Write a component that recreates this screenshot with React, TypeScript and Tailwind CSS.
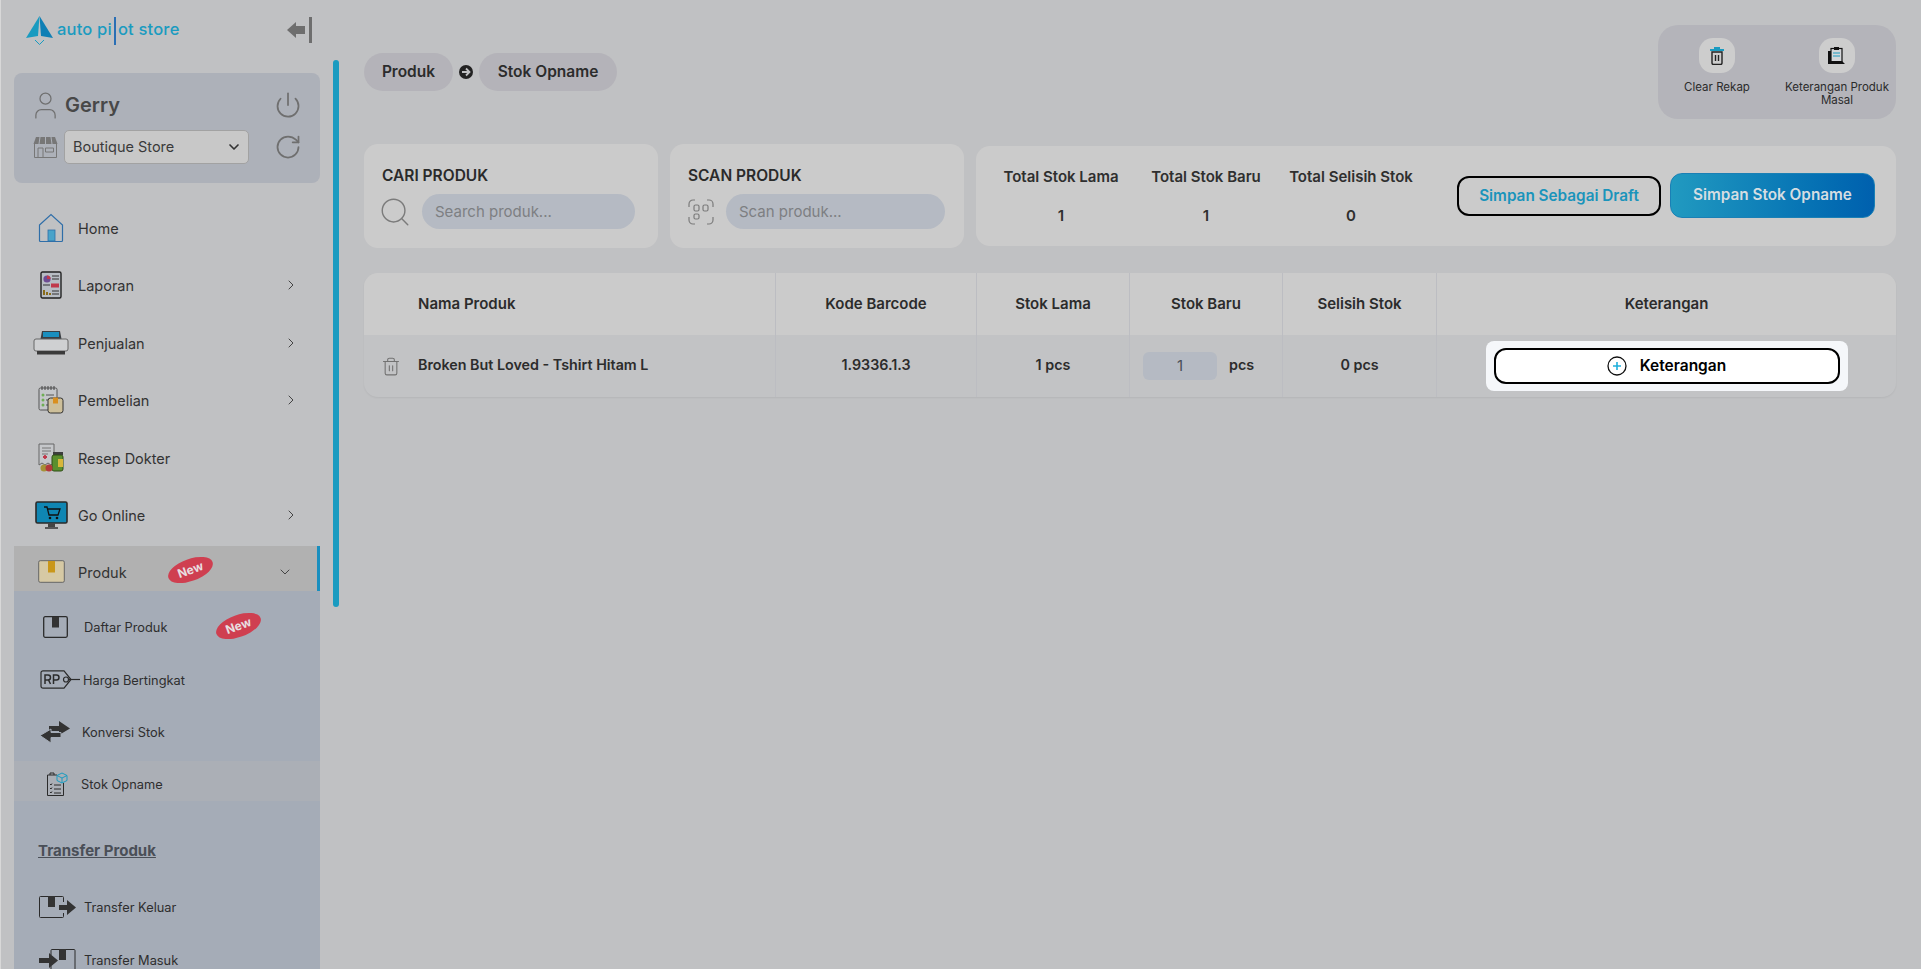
import React from 'react';
import { ChevronDown, ChevronRight, Power, RotateCw, Search, Trash2, User } from 'lucide-react';

const font = { fontFamily: 'Inter, "Noto Sans", sans-serif' };

const HomeIcon = () => (
  <svg width="26" height="30" viewBox="0 0 26 30" fill="none">
    <path d="M1.5 12 13 1.5 24.5 12v15.5a1 1 0 0 1-1 1h-21a1 1 0 0 1-1-1z" stroke="#2f6ea8" strokeWidth="1.2" />
    <rect x="10" y="17" width="7" height="11" fill="#4aa3c9" stroke="#2f6ea8" strokeWidth=".8" />
  </svg>
);

const LaporanIcon = () => (
  <svg width="22" height="28" viewBox="0 0 22 28">
    <rect x="1" y="1" width="20" height="26" rx="1.5" fill="#b8bdc4" stroke="#222" strokeWidth="1.4" />
    <circle cx="7" cy="8" r="3.6" fill="#6d4c93" />
    <path d="M7 8V4.4A3.6 3.6 0 0 1 10.6 8z" fill="#c0394b" />
    <path d="M12 5h7M12 8h7M3 14h7" stroke="#333" strokeWidth="1.2" />
    <rect x="11" y="12.5" width="8" height="4" fill="#c0394b" />
    <path d="M4 24v-5M7 24v-3M10 24v-2" stroke="#8a6d1c" strokeWidth="2" />
    <path d="M12 20h7M12 23h7" stroke="#333" strokeWidth="1.2" />
  </svg>
);

const PenjualanIcon = () => (
  <svg width="36" height="25" viewBox="0 0 36 25">
    <path d="M9 1h18l1.500 8h-21z" fill="#3a3f44" />
    <rect x="10" y="2" width="16" height="5" fill="#1a8fbf" />
    <rect x="1" y="9" width="34" height="12" rx="2" fill="#cfd0d2" stroke="#666" />
    <rect x="4" y="21" width="28" height="3.500" fill="#3a3a3a" />
  </svg>
);

const PembelianIcon = () => (
  <svg width="26" height="28" viewBox="0 0 26 28">
    <rect x="1" y="2" width="18" height="22" rx="1.500" fill="#c5c7ca" stroke="#555" />
    <path d="M4 0v4M7 0v4M10 0v4M13 0v4M16 0v4" stroke="#444" strokeWidth="1" />
    <circle cx="5" cy="9" r="1.500" fill="#6fae55" />
    <circle cx="5" cy="14" r="1.500" fill="#6fae55" />
    <circle cx="5" cy="19" r="1.500" fill="#6fae55" />
    <path d="M8 9h8M8 14h4M8 19h4" stroke="#555" />
    <rect x="10" y="12" width="15" height="15" rx="2.500" fill="#cdbf9a" stroke="#333" />
    <rect x="15" y="11.500" width="5" height="6" fill="#d98f1f" />
  </svg>
);

const ResepIcon = () => (
  <svg width="26" height="29" viewBox="0 0 26 29">
    <path d="M1 1h15v19l-3 2-3-2-3 2-3-2-3 2z" fill="#c5c7ca" stroke="#666" />
    <path d="M4 5h9M4 8h9M4 11h6" stroke="#777" />
    <path d="M5 14h4M7 12v4" stroke="#c0394b" strokeWidth="1.800" />
    <rect x="15" y="9" width="10" height="3" fill="#3d3d3d" />
    <rect x="14" y="12" width="11" height="16" rx="2" fill="#5a8f2e" stroke="#2f4f16" />
    <rect x="20" y="16" width="5" height="8" fill="#d8b63a" />
    <circle cx="6" cy="25" r="3.500" fill="#a59237" />
    <circle cx="11" cy="25" r="3.500" fill="#b23a3a" />
  </svg>
);

const GoOnlineIcon = () => (
  <svg width="33" height="28" viewBox="0 0 33 28">
    <rect x="1" y="1" width="31" height="21" rx="1.500" fill="#0f86b3" stroke="#2a2a2a" strokeWidth="1.600" />
    <path d="M9 6h3l2 8h9l2-6H13" fill="none" stroke="#111" strokeWidth="1.300" />
    <circle cx="15" cy="17" r="1.300" fill="#111" />
    <circle cx="22" cy="17" r="1.300" fill="#111" />
    <rect x="13" y="22" width="7" height="4" fill="#444" />
    <path d="M10 27h13" stroke="#111" strokeWidth="1.200" />
  </svg>
);

const ProdukIcon = () => (
  <svg width="27" height="23" viewBox="0 0 27 23">
    <rect x=".7" y=".7" width="25.600" height="21.600" rx="1.500" fill="#d6c9a4" stroke="#666" />
    <rect x="10" y="1" width="7" height="11.500" fill="#c9971a" />
  </svg>
);

const DaftarIcon = () => (
  <svg width="25" height="22" viewBox="0 0 25 22">
    <rect x=".7" y=".7" width="23.600" height="20.600" rx="1.500" fill="none" stroke="#2b2b2b" strokeWidth="1.300" />
    <rect x="9" y="1" width="7" height="10.500" fill="#333" />
  </svg>
);

const HargaIcon = () => (
  <svg width="40" height="19" viewBox="0 0 40 19" fill="none">
    <path d="M3 .8h21l7 8.700-7 8.700H3a2 2 0 0 1-2-2V2.800a2 2 0 0 1 2-2z" stroke="#2b2b2b" strokeWidth="1.200" />
    <circle cx="26" cy="9.500" r="2.500" stroke="#2b2b2b" strokeWidth="1.200" />
    <path d="M28.500 9.500H40" stroke="#2b2b2b" strokeWidth="1.200" />
    <path d="M5 14V5h3a2.500 2.500 0 0 1 0 5H5M8.500 10l2 4M13.500 14V5h3a2.500 2.500 0 0 1 0 5h-3" stroke="#2b2b2b" strokeWidth="1.500" />
  </svg>
);

const KonversiIcon = () => (
  <svg width="30" height="22" viewBox="0 0 30 22" fill="#333">
    <path d="M19 0l11 7.500L19 14v-4H9V5h10z" />
    <path d="M11 8v3.500h10v5H11V22L0 14.500z" stroke="#a5acb7" strokeWidth="1" />
  </svg>
);

const OpnameIcon = () => (
  <svg width="22" height="24" viewBox="0 0 22 24" fill="none">
    <path d="M11 3H1.500v20.500h16V11M4 3V1h4v2" stroke="#2b2b2b" strokeWidth="1" />
    <path d="M4 12l1 1 1-1.500M4 16l1 1 1-1.500M4 20l1 1 1-1.500M8 13h7M8 17h7M8 21h7" stroke="#2b2b2b" strokeWidth="1" />
    <path d="M16 1l5 2.500v5L16 11l-5-2.500v-5zM11 3.500 16 6l5-2.500M16 6v5" stroke="#1a9bc0" strokeWidth="1" />
  </svg>
);

const KeluarIcon = () => (
  <svg width="37" height="22" viewBox="0 0 37 22" fill="none">
    <path d="M24.500 6V1.500a1 1 0 0 0-1-1H1.500a1 1 0 0 0-1 1v19a1 1 0 0 0 1 1h22a1 1 0 0 0 1-1V17" stroke="#2b2b2b" />
    <rect x="9" y="0" width="7" height="11" fill="#333" />
    <path d="M20 9h8V4l9 7.500-9 7.500v-5h-8z" fill="#333" />
  </svg>
);

const MasukIcon = () => (
  <svg width="37" height="22" viewBox="0 0 37 22" fill="none">
    <path d="M12 6V1.500a1 1 0 0 1 1-1h22a1 1 0 0 1 1 1v19a1 1 0 0 1-1 1H13a1 1 0 0 1-1-1V17" stroke="#2b2b2b" />
    <rect x="20" y="0" width="7" height="11" fill="#333" />
    <path d="M0 9h10V4l9 7.500-9 7.500v-5H0z" fill="#333" />
  </svg>
);

const StoreIcon = () => (
  <svg width="25" height="22" viewBox="0 0 25 22" fill="none">
    <path d="M3 1h19l2.500 7h-24z" fill="#777" />
    <path d="M7 1 6 8M12.500 1v7M18 1l1 7" stroke="#adb1b9" />
    <path d="M1.500 8v13.500h22V8" stroke="#777" />
    <path d="M5 21V12h5v9M12.500 12h8v4h-8z" stroke="#777" />
  </svg>
);

const ScanIcon = () => (
  <svg width="26" height="26" viewBox="0 0 26 26" fill="none" stroke="#7b7b7b" strokeWidth="1.200">
    <path d="M1 8V5a4 4 0 0 1 4-4h2M19 1h2a4 4 0 0 1 4 4v3M1 18v3a4 4 0 0 0 4 4h2M25 18v3a4 4 0 0 1-4 4h-2" />
    <rect x="6" y="6" width="5" height="6" rx="1.500" />
    <rect x="15" y="6" width="5" height="6" rx="1.500" />
    <rect x="6" y="15" width="5" height="5" rx="1.500" />
  </svg>
);

const Badge = ({ className }: { className: string }) => (
  <span className={`absolute flex h-[22px] w-[47px] -rotate-[20deg] items-center justify-center rounded-[50%] bg-[#cf3f50] text-[12px] font-bold text-[#e8dfe0] ${className}`}>
    New
  </span>
);

const menu = [
  { label: 'Home', icon: <HomeIcon /> },
  { label: 'Laporan', icon: <LaporanIcon />, arrow: true },
  { label: 'Penjualan', icon: <PenjualanIcon />, arrow: true },
  { label: 'Pembelian', icon: <PembelianIcon />, arrow: true },
  { label: 'Resep Dokter', icon: <ResepIcon /> },
  { label: 'Go Online', icon: <GoOnlineIcon />, arrow: true },
];

const SubItem = ({ label, icon, textWidth, className = '' }: { label: string; icon: React.ReactNode; textWidth: string; className?: string }) => (
  <div className={`flex h-10 items-center text-[12.800px] text-[#2e2e2e] ${className}`}>
    <div className={`flex shrink-0 items-center ${textWidth}`}>{icon}</div>
    <span className="mt-[2px]">{label}</span>
  </div>
);

const Sidebar = () => (
  <aside className="relative flex h-full w-[339px] shrink-0 flex-col overflow-hidden border-l border-[#d8d8d8] pl-[13px]">
    <div className="flex h-[73px] w-[306px] shrink-0 items-start justify-between pl-[12px] pr-[8px] pt-[16px]">
      <div className="flex items-center">
        <svg width="27" height="29" viewBox="0 0 27 29">
          <path d="M13.500 0 27 22l-12-2z" fill="#0f7fb5" />
          <path d="M13.500 0 0 22l12-2z" fill="#1a9bc0" />
          <path d="M9 24l4.500 4.500L18 24" fill="none" stroke="#1a9bc0" strokeWidth="1" />
        </svg>
        <div className="ml-[4px] flex items-center text-[16.500px] font-medium tracking-[0.2px] text-[#1a9bc0]">
          <span className="mb-[2px]">auto pi</span>
          <span className="mx-[2px] h-[28px] w-[2px] bg-[#2a6fb5]" />
          <span className="mb-[2px]">ot store</span>
        </div>
      </div>
      <div className="mt-[1px] flex items-center gap-[4px]">
        <svg width="18" height="16" viewBox="0 0 18 16" fill="#6e6e6e">
          <path d="M0 8 9 0v4h9v8H9v4z" />
        </svg>
        <span className="h-[26px] w-[3px] bg-[#6e6e6e]" />
      </div>
    </div>

    <div className="flex h-[110px] w-[306px] shrink-0 flex-col gap-[10px] rounded-lg bg-[#adb1b9] pl-[19px] pr-[18px] pt-[17px]">
      <div className="flex h-[30px] items-center">
        <User className="-ml-[4px] h-[33px] w-[33px] text-[#6f6f6f]" strokeWidth={0.900} />
        <span className="ml-[3px] text-[20px] font-semibold text-[#484848]">Gerry</span>
        <Power className="ml-auto h-[28px] w-[28px] text-[#6f6f6f]" strokeWidth={1.500} />
      </div>
      <div className="flex items-center">
        <StoreIcon />
        <div className="relative ml-[6px] h-[34px] w-[185px]">
          <select defaultValue="Boutique Store" className="h-full w-full appearance-none rounded-[5px] border border-[#a2a2a2] bg-[#c8c8c8] pl-[8px] text-[14.500px] text-[#3a3a3a]">
            <option>Boutique Store</option>
          </select>
          <ChevronDown className="pointer-events-none absolute right-[7px] top-[9px] h-4 w-4 text-[#333]" strokeWidth={2.500} />
        </div>
        <RotateCw className="ml-auto h-[28px] w-[28px] text-[#6f6f6f]" strokeWidth={1.500} />
      </div>
    </div>

    <nav className="mt-4 w-[306px]">
      {menu.map((item) => (
        <div key={item.label} className="flex h-[57.500px] items-center pl-4 pr-[21px] text-[14.500px] text-[#333]">
          <div className="flex w-[42px] justify-center">{item.icon}</div>
          <span className="ml-[6px] mt-[2px]">{item.label}</span>
          {item.arrow && <ChevronRight className="ml-auto h-4 w-4 text-[#444]" strokeWidth={1.500} />}
        </div>
      ))}
      <div className="relative mt-[2px] flex h-[45px] items-center border-r-[3px] border-[#1a8fbf] bg-[#b1b1b1] pl-4 pr-[24px] pt-[6px] text-[14.500px] text-[#333]">
        <div className="flex w-[42px] justify-center"><ProdukIcon /></div>
        <span className="ml-[6px] mt-[2px]">Produk</span>
        <Badge className="left-[153px] top-[13px]" />
        <ChevronDown className="ml-auto h-4 w-4 text-[#444]" strokeWidth={1.500} />
      </div>
      <div className="relative bg-[#a5acb7] pb-10 pt-4">
        <Badge className="left-[201px] top-[24px]" />
        <SubItem label="Daftar Produk" icon={<DaftarIcon />} textWidth="w-[41px]" className="mb-[12.500px] pl-[29px]" />
        <SubItem label="Harga Bertingkat" icon={<HargaIcon />} textWidth="w-[43px]" className="mb-[12.500px] pl-[26px]" />
        <SubItem label="Konversi Stok" icon={<KonversiIcon />} textWidth="w-[42px]" className="pl-[26px]" />
        <SubItem label="Stok Opname" icon={<OpnameIcon />} textWidth="w-[35px]" className="mt-[9px] bg-[#abafb6] pl-[32px] pt-[5px]" />
        <p className="mt-[40px] pl-6 text-[15px] font-bold leading-5 text-[#4a4f57] underline">Transfer Produk</p>
        <SubItem label="Transfer Keluar" icon={<KeluarIcon />} textWidth="w-[45px]" className="mb-[13px] mt-[26px] pl-[25px]" />
        <SubItem label="Transfer Masuk" icon={<MasukIcon />} textWidth="w-[45px]" className="pl-[25px]" />
      </div>
    </nav>

    <div className="absolute right-0 top-[60px] h-[547px] w-[6px] rounded-full bg-[#1a9bc0]" />
  </aside>
);

const SearchCard = ({ title, placeholder, icon, inputWidth }: { title: string; placeholder: string; icon: React.ReactNode; inputWidth: string }) => (
  <div className="flex h-[104px] w-[294px] flex-col rounded-[14px] bg-[#cbcbcb] pl-[18px] pt-[22px]">
    <h3 className="text-[15.500px] font-semibold leading-5 text-[#2a2a2a]">{title}</h3>
    <div className="mt-[8px] flex items-center gap-[12px]">
      {icon}
      <input placeholder={placeholder} className={`h-[35px] rounded-full bg-[#b5bac3] pl-[13px] text-[15px] outline-none placeholder:text-[#7d7f82] ${inputWidth}`} />
    </div>
  </div>
);

const Total = ({ label, value, width }: { label: string; value: string; width: string }) => (
  <div className={`flex flex-col items-center gap-[19px] text-[15px] font-semibold leading-5 text-[#2f2f2f] ${width}`}>
    <span>{label}</span>
    <span>{value}</span>
  </div>
);

const columns = 'grid grid-cols-[412px_201px_153px_153px_154px_1fr]';
const cell = 'flex items-center justify-center border-r border-[#bcbdc2] last:border-r-0';

const Main = () => (
  <main className="flex min-w-0 flex-1 flex-col pl-[25px] pr-[25px]">
    <div className="flex h-[146px] shrink-0 items-start justify-between">
      <div className="mt-[53px] flex items-center gap-[6px] text-[15.500px] font-semibold text-[#2c2c2c]">
        <span className="flex h-[38px] w-[89px] items-center justify-center rounded-full bg-[#b4b3b9]">Produk</span>
        <svg width="14" height="14" viewBox="0 0 14 14">
          <circle cx="7" cy="7" r="7" fill="#222" />
          <path d="M3 7h7M7 3.500 10.500 7 7 10.500" fill="none" stroke="#c0c1c3" strokeWidth="1.800" />
        </svg>
        <span className="flex h-[38px] w-[138px] items-center justify-center rounded-full bg-[#b4b3b9]">Stok Opname</span>
      </div>
      <div className="mt-[25px] flex h-[94px] w-[238px] rounded-[20px] bg-[#b4b4ba] pl-[9px] pt-[13px] text-center text-[11.500px] leading-[13px] text-[#2b2b2b]">
        <div className="flex w-[100px] flex-col items-center gap-[8px]">
          <div className="flex h-[35px] w-[36px] items-center justify-center rounded-[14px] bg-[#cdcdcd]">
            <svg width="14" height="18" viewBox="0 0 14 18" fill="none">
              <path d="M0 3h14M5 3V1h4v2" stroke="#1a9bc0" strokeWidth="2" />
              <path d="M2 5h10v11a1.500 1.500 0 0 1-1.500 1.500h-7A1.500 1.500 0 0 1 2 16z" stroke="#222" strokeWidth="1.400" />
              <path d="M5.500 8v6M8.500 8v6" stroke="#222" strokeWidth="1.400" />
            </svg>
          </div>
          <span>Clear Rekap</span>
        </div>
        <div className="ml-[16px] flex w-[108px] flex-col items-center gap-[8px]">
          <div className="flex h-[35px] w-[36px] items-center justify-center rounded-[14px] bg-[#cdcdcd]">
            <svg width="18" height="18" viewBox="0 0 18 18">
              <rect x="3" y="1.500" width="11" height="14" fill="#d5d7da" stroke="#111" strokeWidth="1.200" />
              <path d="M5 6h7M5 9h7" stroke="#1a9bc0" strokeWidth="1" />
              <path d="M0 4v13h17l-3-3H3V4z" fill="#111" />
              <rect x="6" y="0" width="5" height="3" fill="#111" />
            </svg>
          </div>
          <span>Keterangan Produk Masal</span>
        </div>
      </div>
    </div>

    <div className="-mt-[2px] flex items-center gap-3">
      <SearchCard title="CARI PRODUK" placeholder="Search produk..." inputWidth="w-[213px]" icon={<Search className="-ml-[4px] -mr-[2px] h-[34px] w-[34px] text-[#7b7b7b]" strokeWidth={1} />} />
      <SearchCard title="SCAN PRODUK" placeholder="Scan produk..." inputWidth="w-[219px]" icon={<ScanIcon />} />
      <div className="flex h-[100px] flex-1 items-center rounded-[14px] bg-[#cbcbcb] pl-[19px] pr-[21px]">
        <Total label="Total Stok Lama" value="1" width="w-[132px]" />
        <Total label="Total Stok Baru" value="1" width="w-[158px]" />
        <Total label="Total Selisih Stok" value="0" width="w-[132px]" />
        <button className="ml-auto h-[40px] w-[204px] rounded-xl border-2 border-black text-[15.300px] font-semibold text-[#1a94bb]">Simpan Sebagai Draft</button>
        <button className="mb-[2px] ml-[9px] h-[45px] w-[205px] rounded-xl border border-[#1a80b5] bg-gradient-to-r from-[#219ac0] to-[#0060ae] text-[15.300px] font-semibold text-[#d5dde2]">Simpan Stok Opname</button>
      </div>
    </div>

    <div className="mt-[25px] overflow-hidden rounded-[14px] bg-[#c2c3c5] text-[15px] font-semibold text-[#2c2c2c] shadow-[0_1px_2px_rgba(0,0,0,0.06)]">
      <div className={`${columns} h-[62px] bg-[#cbcbcb]`}>
        <div className={`${cell} !justify-start pl-[54px]`}>Nama Produk</div>
        <div className={cell}>Kode Barcode</div>
        <div className={cell}>Stok Lama</div>
        <div className={cell}>Stok Baru</div>
        <div className={cell}>Selisih Stok</div>
        <div className={cell}>Keterangan</div>
      </div>
      <div className={`${columns} h-[62px] text-[14.300px]`}>
        <div className={`${cell} !justify-start pl-[17px]`}>
          <Trash2 className="h-[21px] w-[20px] text-[#727272]" strokeWidth={1.300} />
          <span className="mb-[2px] ml-[17px]">Broken But Loved - Tshirt Hitam L</span>
        </div>
        <div className={`${cell} pb-[2px]`}>1.9336.1.3</div>
        <div className={`${cell} pb-[2px]`}>1 pcs</div>
        <div className={`${cell} gap-[12px] !justify-start pl-[13px]`}>
          <span className="flex h-[28px] w-[74px] items-center justify-center rounded-md bg-[#b5bac3] text-[15px] font-normal text-[#4a4f57]">1</span>
          <span className="mb-[2px]">pcs</span>
        </div>
        <div className={`${cell} pb-[2px]`}>0 pcs</div>
        <div className={cell}>
          <div className="rounded-lg bg-[#f5f7fa] px-[8px] py-[7px]">
            <button className="flex h-[36px] w-[346px] items-center justify-center gap-[13px] rounded-xl border-2 border-black bg-white text-[15.500px] font-semibold text-black">
              <svg width="20" height="20" viewBox="0 0 20 20" fill="none">
                <circle cx="10" cy="10" r="9" stroke="#111" strokeWidth="1.300" />
                <path d="M10 6v8M6 10h8" stroke="#1fb0dc" strokeWidth="1.600" />
              </svg>
              Keterangan
            </button>
          </div>
        </div>
      </div>
    </div>
  </main>
);

export default function App() {
  return (
    <div className="flex h-screen overflow-hidden bg-[#c0c1c3]" style={font}>
      <Sidebar />
      <Main />
    </div>
  );
}
